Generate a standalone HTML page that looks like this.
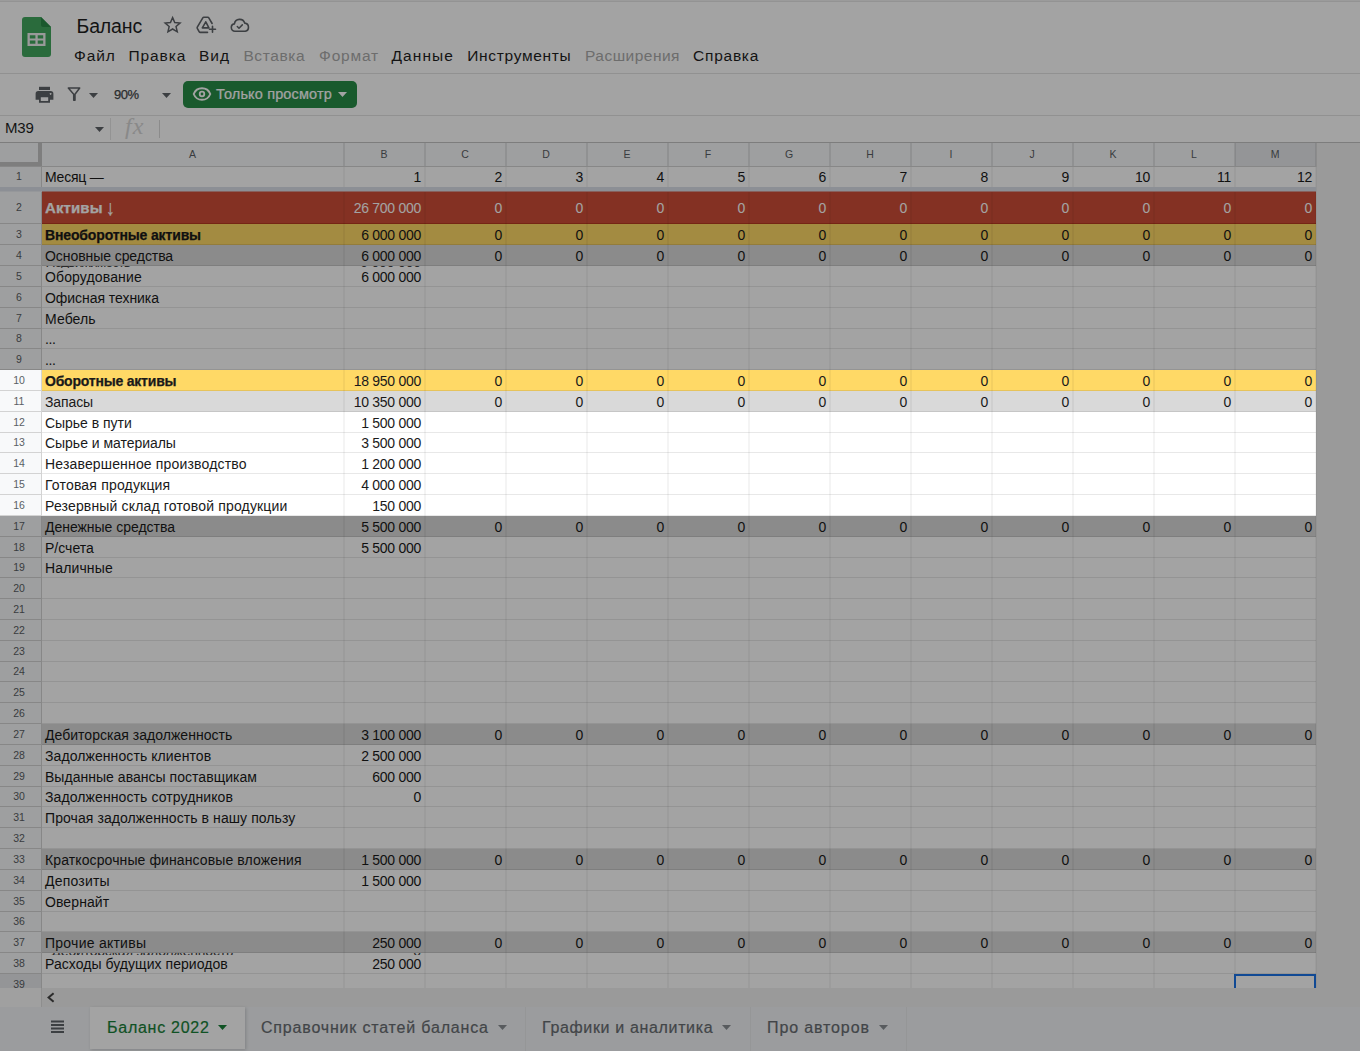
<!DOCTYPE html><html lang="ru"><head><meta charset="utf-8"><title>Баланс</title><style>
*{box-sizing:border-box;margin:0;padding:0}
html,body{width:1360px;height:1051px;overflow:hidden;background:#fff}
body{position:relative;font-family:"Liberation Sans",sans-serif;color:#000}
.a{position:absolute;white-space:pre}
.t{position:absolute;white-space:pre;line-height:1}
.menu{font-size:15.5px;top:47.5px;height:16px;line-height:16px;color:#1f1f1f}
.menu.dis{color:#ababab}
.c{position:absolute;white-space:pre;font-size:14px;overflow:hidden;color:#1a1a1a}
.ca{padding-left:3px}
.cn{text-align:right;padding-right:3px;font-size:14px;letter-spacing:-0.28px}
.b{font-weight:bold;-webkit-text-stroke:0.25px currentColor}
.rh{position:absolute;left:0;width:38px;text-align:center;font-size:10.5px;color:#5a5f64}
.ch{position:absolute;top:143px;height:23px;line-height:23px;text-align:center;font-size:10.5px;color:#5a5f64}
.vl{position:absolute;width:1px;background:#e1e1e1}
.hl{position:absolute;height:1px;background:#e1e1e1}
.tab{position:absolute;top:1007px;height:44px;font-size:16px;color:#5f6368}
</style></head><body>
<div class="a" style="left:0;top:0;width:1360px;height:1px;background:#f2f2f2"></div>
<div class="a" style="left:0;top:1px;width:1360px;height:1px;background:#e6e6e6"></div>
<svg class="a" style="left:22px;top:17px" width="29" height="40" viewBox="0 0 29 40"><path d="M3 0h16l10 10v27a3 3 0 0 1-3 3H3a3 3 0 0 1-3-3V3a3 3 0 0 1 3-3z" fill="#43a85f"/><path d="M19 0l10 10H21a2 2 0 0 1-2-2z" fill="#2a8a47"/><path d="M5.500 16v13h18V16zm2.300 2.300h5.600v3.100H7.800zm7.900 0h5.500v3.100h-5.500zM7.800 23.600h5.600v3.100H7.800zm7.900 0h5.500v3.100h-5.500z" fill="#f1f1f1" fill-rule="evenodd"/></svg>
<div class="t" style="left:76.5px;top:15px;font-size:19.5px;line-height:22px;letter-spacing:-0.148px;color:#1f1f1f">Баланс</div>
<svg class="a" style="left:163px;top:15px" width="20" height="20" viewBox="0 0 20 20"><path d="M9.600 2.600l2.150 4.900 5.300.5-4 3.550 1.200 5.250-4.650-2.800-4.650 2.800 1.200-5.250-4-3.550 5.300-.5z" fill="none" stroke="#5f6368" stroke-width="1.500" stroke-linejoin="miter"/></svg>
<svg class="a" style="left:195px;top:15px" width="24" height="20" viewBox="0 0 24 20"><g fill="none" stroke="#5f6368" stroke-width="1.600" stroke-linejoin="round" stroke-linecap="round"><path d="M12.500 17.400H5.300a1.200 1.200 0 0 1-1.050-.6L2.300 13.400a1.200 1.200 0 0 1 0-1.200L7.800 2.800a1.200 1.200 0 0 1 1.050-.6h3.900a1.200 1.200 0 0 1 1.050.6l3.300 5.700"/><path d="M10.800 6.800l-3.500 6.100h6.600z"/><path d="M17.500 11.300v6M14.500 14.300h6"/></g></svg>
<svg class="a" style="left:229px;top:17px" width="22" height="17" viewBox="0 0 22 17"><g fill="none" stroke="#5f6368" stroke-width="1.600" stroke-linejoin="round" stroke-linecap="round"><path d="M6 14.200a3.700 3.700 0 0 1-.6-7.350A5.300 5.300 0 0 1 15.700 6.100a4.100 4.100 0 0 1 .5 8.100z"/><path d="M8.300 9.500l1.700 1.700 3.300-3.300" stroke-width="1.500"/></g></svg>
<div class="a menu" style="left:74.10px;letter-spacing:0.85px">Файл</div>
<div class="a menu" style="left:128.60px;letter-spacing:0.86px">Правка</div>
<div class="a menu" style="left:199.10px;letter-spacing:0.907px">Вид</div>
<div class="a menu dis" style="left:243.40px;letter-spacing:0.622px">Вставка</div>
<div class="a menu dis" style="left:319.10px;letter-spacing:0.799px">Формат</div>
<div class="a menu" style="left:391.50px;letter-spacing:1.092px">Данные</div>
<div class="a menu" style="left:467.30px;letter-spacing:0.67px">Инструменты</div>
<div class="a menu dis" style="left:585.00px;letter-spacing:0.48px">Расширения</div>
<div class="a menu" style="left:693.10px;letter-spacing:0.741px">Справка</div>
<div class="a" style="left:0;top:73px;width:1360px;height:1px;background:#e3e3e3"></div>
<svg class="a" style="left:35px;top:86px" width="20" height="18" viewBox="0 0 20 18"><path d="M4 .8h11v3.200H4z" fill="#5f6368"/><path d="M3.300 5h12.400A2.700 2.700 0 0 1 18.400 7.700v6H15V16.800H4V13.700H.6v-6A2.700 2.700 0 0 1 3.300 5zM5.800 11.200v3.900h7.400v-3.900zM15.600 7a.9.900 0 1 0 .01 0z" fill="#5f6368" fill-rule="evenodd"/></svg>
<svg class="a" style="left:66px;top:86px" width="17" height="17" viewBox="0 0 17 17"><path d="M2.300 2h11.400L9 8.200v6H7.700v-6z" fill="none" stroke="#5f6368" stroke-width="1.500" stroke-linejoin="round"/></svg>
<svg class="a" style="left:88.500px;top:93px" width="9" height="5" viewBox="0 0 9 5"><path d="M0 0h9L4.500 5z" fill="#5f6368"/></svg>
<div class="t" style="left:114px;top:87.5px;font-size:13px;line-height:14px;-webkit-text-stroke:0.25px #44474a;letter-spacing:-0.444px;color:#44474a">90%</div>
<svg class="a" style="left:161.500px;top:93px" width="9" height="5" viewBox="0 0 9 5"><path d="M0 0h9L4.500 5z" fill="#5f6368"/></svg>
<div class="a" style="left:183px;top:81px;width:173.500px;height:26.500px;border-radius:5px;background:#288d47"></div>
<svg class="a" style="left:192px;top:86px" width="20" height="16" viewBox="0 0 20 16"><path d="M10 2.200c-3.800 0-6.900 2.300-8.300 5.800 1.400 3.500 4.500 5.800 8.300 5.800s6.900-2.300 8.300-5.800C16.900 4.500 13.800 2.200 10 2.200z" fill="none" stroke="#fff" stroke-width="1.900"/><circle cx="10" cy="8" r="2.300" fill="none" stroke="#fff" stroke-width="1.800"/></svg>
<div class="t" style="left:216px;top:86px;font-size:14.5px;line-height:16px;-webkit-text-stroke:0.2px #fff;letter-spacing:0.151px;color:#fff">Только просмотр</div>
<svg class="a" style="left:338px;top:92px" width="9" height="5" viewBox="0 0 9 5"><path d="M0 0h9L4.500 5z" fill="#fff"/></svg>
<div class="a" style="left:0;top:115px;width:1360px;height:1px;background:#e3e3e3"></div>
<div class="t" style="left:5px;top:120px;font-size:15px;line-height:16px;letter-spacing:-0.229px;color:#1f1f1f">M39</div>
<svg class="a" style="left:95px;top:127px" width="9" height="5" viewBox="0 0 9 5"><path d="M0 0h9L4.500 5z" fill="#5f6368"/></svg>
<div class="a" style="left:110px;top:118px;width:1px;height:22px;background:#e6e6e6"></div>
<div class="t" style="left:125px;top:114px;font-family:'Liberation Serif',serif;font-style:italic;font-size:24px;line-height:24px;color:#d6d6d6;letter-spacing:1px">fx</div>
<div class="a" style="left:159px;top:120px;width:1px;height:18px;background:#dadada"></div>
<div class="a" style="left:0;top:142px;width:1360px;height:1px;background:#c4c4c4"></div>
<div class="a" style="left:0;top:143px;width:1360px;height:845px;background:#f1f1f1"></div>
<div class="a" style="left:0;top:143px;width:1316px;height:23px;background:#f8f9fa"></div>
<div class="a" style="left:0;top:143px;width:42px;height:845px;background:#f8f9fa"></div>
<div class="a" style="left:42px;top:167px;width:1274px;height:821px;background:#fff"></div>
<div class="a" style="left:42px;top:192px;width:1274px;height:32px;background:#cf4e37"></div>
<div class="a" style="left:42px;top:224px;width:1274px;height:21px;background:#ffd966"></div>
<div class="a" style="left:42px;top:245px;width:1274px;height:21px;background:#d9d9d9"></div>
<div class="a" style="left:42px;top:370px;width:1274px;height:21px;background:#ffd966"></div>
<div class="a" style="left:42px;top:391px;width:1274px;height:21px;background:#d9d9d9"></div>
<div class="a" style="left:42px;top:516px;width:1274px;height:21px;background:#d9d9d9"></div>
<div class="a" style="left:42px;top:724px;width:1274px;height:21px;background:#d9d9d9"></div>
<div class="a" style="left:42px;top:849px;width:1274px;height:21px;background:#d9d9d9"></div>
<div class="a" style="left:42px;top:932px;width:1274px;height:21px;background:#d9d9d9"></div>
<div class="a" style="left:0;top:974px;width:42px;height:14px;background:#e8eaed"></div>
<div class="a" style="left:1235px;top:143px;width:81px;height:23px;background:#e8eaed"></div>
<div class="hl" style="left:42px;top:223px;width:1274px;background:#b83a21"></div>
<div class="hl" style="left:0;top:223px;width:42px;background:#d3d3d3"></div>
<div class="hl" style="left:42px;top:244px;width:1274px;background:#e6c35c"></div>
<div class="hl" style="left:0;top:244px;width:42px;background:#d3d3d3"></div>
<div class="hl" style="left:42px;top:265px;width:1274px;background:#c6c6c6"></div>
<div class="hl" style="left:0;top:265px;width:42px;background:#d3d3d3"></div>
<div class="hl" style="left:42px;top:286px;width:1274px;background:#e8e8e8"></div>
<div class="hl" style="left:0;top:286px;width:42px;background:#d3d3d3"></div>
<div class="hl" style="left:42px;top:307px;width:1274px;background:#e8e8e8"></div>
<div class="hl" style="left:0;top:307px;width:42px;background:#d3d3d3"></div>
<div class="hl" style="left:42px;top:328px;width:1274px;background:#e8e8e8"></div>
<div class="hl" style="left:0;top:328px;width:42px;background:#d3d3d3"></div>
<div class="hl" style="left:42px;top:348px;width:1274px;background:#e8e8e8"></div>
<div class="hl" style="left:0;top:348px;width:42px;background:#d3d3d3"></div>
<div class="hl" style="left:42px;top:369px;width:1274px;background:#e8e8e8"></div>
<div class="hl" style="left:0;top:369px;width:42px;background:#d3d3d3"></div>
<div class="hl" style="left:42px;top:390px;width:1274px;background:#e6c35c"></div>
<div class="hl" style="left:0;top:390px;width:42px;background:#d3d3d3"></div>
<div class="hl" style="left:42px;top:411px;width:1274px;background:#c6c6c6"></div>
<div class="hl" style="left:0;top:411px;width:42px;background:#d3d3d3"></div>
<div class="hl" style="left:42px;top:432px;width:1274px;background:#e8e8e8"></div>
<div class="hl" style="left:0;top:432px;width:42px;background:#d3d3d3"></div>
<div class="hl" style="left:42px;top:452px;width:1274px;background:#e8e8e8"></div>
<div class="hl" style="left:0;top:452px;width:42px;background:#d3d3d3"></div>
<div class="hl" style="left:42px;top:473px;width:1274px;background:#e8e8e8"></div>
<div class="hl" style="left:0;top:473px;width:42px;background:#d3d3d3"></div>
<div class="hl" style="left:42px;top:494px;width:1274px;background:#e8e8e8"></div>
<div class="hl" style="left:0;top:494px;width:42px;background:#d3d3d3"></div>
<div class="hl" style="left:42px;top:515px;width:1274px;background:#e8e8e8"></div>
<div class="hl" style="left:0;top:515px;width:42px;background:#d3d3d3"></div>
<div class="hl" style="left:42px;top:536px;width:1274px;background:#c6c6c6"></div>
<div class="hl" style="left:0;top:536px;width:42px;background:#d3d3d3"></div>
<div class="hl" style="left:42px;top:557px;width:1274px;background:#e8e8e8"></div>
<div class="hl" style="left:0;top:557px;width:42px;background:#d3d3d3"></div>
<div class="hl" style="left:42px;top:577px;width:1274px;background:#e8e8e8"></div>
<div class="hl" style="left:0;top:577px;width:42px;background:#d3d3d3"></div>
<div class="hl" style="left:42px;top:598px;width:1274px;background:#e8e8e8"></div>
<div class="hl" style="left:0;top:598px;width:42px;background:#d3d3d3"></div>
<div class="hl" style="left:42px;top:619px;width:1274px;background:#e8e8e8"></div>
<div class="hl" style="left:0;top:619px;width:42px;background:#d3d3d3"></div>
<div class="hl" style="left:42px;top:640px;width:1274px;background:#e8e8e8"></div>
<div class="hl" style="left:0;top:640px;width:42px;background:#d3d3d3"></div>
<div class="hl" style="left:42px;top:661px;width:1274px;background:#e8e8e8"></div>
<div class="hl" style="left:0;top:661px;width:42px;background:#d3d3d3"></div>
<div class="hl" style="left:42px;top:681px;width:1274px;background:#e8e8e8"></div>
<div class="hl" style="left:0;top:681px;width:42px;background:#d3d3d3"></div>
<div class="hl" style="left:42px;top:702px;width:1274px;background:#e8e8e8"></div>
<div class="hl" style="left:0;top:702px;width:42px;background:#d3d3d3"></div>
<div class="hl" style="left:42px;top:723px;width:1274px;background:#e8e8e8"></div>
<div class="hl" style="left:0;top:723px;width:42px;background:#d3d3d3"></div>
<div class="hl" style="left:42px;top:744px;width:1274px;background:#c6c6c6"></div>
<div class="hl" style="left:0;top:744px;width:42px;background:#d3d3d3"></div>
<div class="hl" style="left:42px;top:765px;width:1274px;background:#e8e8e8"></div>
<div class="hl" style="left:0;top:765px;width:42px;background:#d3d3d3"></div>
<div class="hl" style="left:42px;top:786px;width:1274px;background:#e8e8e8"></div>
<div class="hl" style="left:0;top:786px;width:42px;background:#d3d3d3"></div>
<div class="hl" style="left:42px;top:806px;width:1274px;background:#e8e8e8"></div>
<div class="hl" style="left:0;top:806px;width:42px;background:#d3d3d3"></div>
<div class="hl" style="left:42px;top:827px;width:1274px;background:#e8e8e8"></div>
<div class="hl" style="left:0;top:827px;width:42px;background:#d3d3d3"></div>
<div class="hl" style="left:42px;top:848px;width:1274px;background:#e8e8e8"></div>
<div class="hl" style="left:0;top:848px;width:42px;background:#d3d3d3"></div>
<div class="hl" style="left:42px;top:869px;width:1274px;background:#c6c6c6"></div>
<div class="hl" style="left:0;top:869px;width:42px;background:#d3d3d3"></div>
<div class="hl" style="left:42px;top:890px;width:1274px;background:#e8e8e8"></div>
<div class="hl" style="left:0;top:890px;width:42px;background:#d3d3d3"></div>
<div class="hl" style="left:42px;top:911px;width:1274px;background:#e8e8e8"></div>
<div class="hl" style="left:0;top:911px;width:42px;background:#d3d3d3"></div>
<div class="hl" style="left:42px;top:931px;width:1274px;background:#e8e8e8"></div>
<div class="hl" style="left:0;top:931px;width:42px;background:#d3d3d3"></div>
<div class="hl" style="left:42px;top:952px;width:1274px;background:#c6c6c6"></div>
<div class="hl" style="left:0;top:952px;width:42px;background:#d3d3d3"></div>
<div class="hl" style="left:42px;top:973px;width:1274px;background:#e8e8e8"></div>
<div class="hl" style="left:0;top:973px;width:42px;background:#d3d3d3"></div>
<div class="vl" style="left:343px;top:167px;width:2px;height:821px;background:rgba(0,0,0,0.042)"></div>
<div class="vl" style="left:343px;top:143px;width:2px;height:24px;background:rgba(0,0,0,.085)"></div>
<div class="vl" style="left:424px;top:167px;width:2px;height:821px;background:rgba(0,0,0,0.042)"></div>
<div class="vl" style="left:424px;top:143px;width:2px;height:24px;background:rgba(0,0,0,.085)"></div>
<div class="vl" style="left:505px;top:167px;width:2px;height:821px;background:rgba(0,0,0,0.042)"></div>
<div class="vl" style="left:505px;top:143px;width:2px;height:24px;background:rgba(0,0,0,.085)"></div>
<div class="vl" style="left:586px;top:167px;width:2px;height:821px;background:rgba(0,0,0,0.042)"></div>
<div class="vl" style="left:586px;top:143px;width:2px;height:24px;background:rgba(0,0,0,.085)"></div>
<div class="vl" style="left:667px;top:167px;width:2px;height:821px;background:rgba(0,0,0,0.042)"></div>
<div class="vl" style="left:667px;top:143px;width:2px;height:24px;background:rgba(0,0,0,.085)"></div>
<div class="vl" style="left:748px;top:167px;width:2px;height:821px;background:rgba(0,0,0,0.042)"></div>
<div class="vl" style="left:748px;top:143px;width:2px;height:24px;background:rgba(0,0,0,.085)"></div>
<div class="vl" style="left:829px;top:167px;width:2px;height:821px;background:rgba(0,0,0,0.042)"></div>
<div class="vl" style="left:829px;top:143px;width:2px;height:24px;background:rgba(0,0,0,.085)"></div>
<div class="vl" style="left:910px;top:167px;width:2px;height:821px;background:rgba(0,0,0,0.042)"></div>
<div class="vl" style="left:910px;top:143px;width:2px;height:24px;background:rgba(0,0,0,.085)"></div>
<div class="vl" style="left:991px;top:167px;width:2px;height:821px;background:rgba(0,0,0,0.042)"></div>
<div class="vl" style="left:991px;top:143px;width:2px;height:24px;background:rgba(0,0,0,.085)"></div>
<div class="vl" style="left:1072px;top:167px;width:2px;height:821px;background:rgba(0,0,0,0.042)"></div>
<div class="vl" style="left:1072px;top:143px;width:2px;height:24px;background:rgba(0,0,0,.085)"></div>
<div class="vl" style="left:1153px;top:167px;width:2px;height:821px;background:rgba(0,0,0,0.042)"></div>
<div class="vl" style="left:1153px;top:143px;width:2px;height:24px;background:rgba(0,0,0,.085)"></div>
<div class="vl" style="left:1234px;top:167px;width:2px;height:821px;background:rgba(0,0,0,0.042)"></div>
<div class="vl" style="left:1234px;top:143px;width:2px;height:24px;background:rgba(0,0,0,.085)"></div>
<div class="vl" style="left:1315px;top:167px;width:2px;height:821px;background:rgba(0,0,0,0.042)"></div>
<div class="vl" style="left:1315px;top:143px;width:2px;height:24px;background:rgba(0,0,0,.085)"></div>
<div class="hl" style="left:0;top:166px;width:1316px;background:#d3d3d3"></div>
<div class="vl" style="left:41px;top:167px;height:821px;background:#d3d3d3"></div>
<div class="a" style="left:0;top:187px;width:1316px;height:4px;background:#dbe0e9"></div>
<div class="a" style="left:0;top:191px;width:42px;height:1px;background:#eaecf1"></div>
<div class="a" style="left:42px;top:191px;width:1274px;height:1px;background:#d59790"></div>
<div class="a" style="left:38px;top:143px;width:4px;height:23px;background:#c6c6c6"></div>
<div class="a" style="left:0;top:162px;width:42px;height:4px;background:#c6c6c6"></div>
<div class="ch" style="left:42px;width:301px">A</div>
<div class="ch" style="left:344px;width:80px">B</div>
<div class="ch" style="left:425px;width:80px">C</div>
<div class="ch" style="left:506px;width:80px">D</div>
<div class="ch" style="left:587px;width:80px">E</div>
<div class="ch" style="left:668px;width:80px">F</div>
<div class="ch" style="left:749px;width:80px">G</div>
<div class="ch" style="left:830px;width:80px">H</div>
<div class="ch" style="left:911px;width:80px">I</div>
<div class="ch" style="left:992px;width:80px">J</div>
<div class="ch" style="left:1073px;width:80px">K</div>
<div class="ch" style="left:1154px;width:80px">L</div>
<div class="ch" style="left:1235px;width:80px">M</div>
<div class="rh" style="top:167px;height:19px;line-height:19px">1</div>
<div class="c ca" style="left:42px;top:167px;width:301px;height:19px;line-height:21.0px;letter-spacing:-0.216px;">Месяц —</div>
<div class="c cn" style="left:344px;top:167px;width:80px;height:19px;line-height:21.0px;">1</div>
<div class="c cn" style="left:425px;top:167px;width:80px;height:19px;line-height:21.0px;">2</div>
<div class="c cn" style="left:506px;top:167px;width:80px;height:19px;line-height:21.0px;">3</div>
<div class="c cn" style="left:587px;top:167px;width:80px;height:19px;line-height:21.0px;">4</div>
<div class="c cn" style="left:668px;top:167px;width:80px;height:19px;line-height:21.0px;">5</div>
<div class="c cn" style="left:749px;top:167px;width:80px;height:19px;line-height:21.0px;">6</div>
<div class="c cn" style="left:830px;top:167px;width:80px;height:19px;line-height:21.0px;">7</div>
<div class="c cn" style="left:911px;top:167px;width:80px;height:19px;line-height:21.0px;">8</div>
<div class="c cn" style="left:992px;top:167px;width:80px;height:19px;line-height:21.0px;">9</div>
<div class="c cn" style="left:1073px;top:167px;width:80px;height:19px;line-height:21.0px;">10</div>
<div class="c cn" style="left:1154px;top:167px;width:80px;height:19px;line-height:21.0px;">11</div>
<div class="c cn" style="left:1235px;top:167px;width:80px;height:19px;line-height:21.0px;">12</div>
<div class="rh" style="top:192px;height:31px;line-height:31px">2</div>
<div class="c ca b" style="left:42px;top:192px;width:301px;height:31px;line-height:32px;font-size:15px;letter-spacing:0.108px;color:#fff;">Активы <span style="display:inline-block;font-weight:normal;font-size:17px;line-height:10px;transform:translate(-1px,1px) scale(1,1.25)">↓</span></div>
<div class="c cn" style="left:344px;top:192px;width:80px;height:31px;line-height:32px;color:#fff;">26 700 000</div>
<div class="c cn" style="left:425px;top:192px;width:80px;height:31px;line-height:32px;color:#fff;">0</div>
<div class="c cn" style="left:506px;top:192px;width:80px;height:31px;line-height:32px;color:#fff;">0</div>
<div class="c cn" style="left:587px;top:192px;width:80px;height:31px;line-height:32px;color:#fff;">0</div>
<div class="c cn" style="left:668px;top:192px;width:80px;height:31px;line-height:32px;color:#fff;">0</div>
<div class="c cn" style="left:749px;top:192px;width:80px;height:31px;line-height:32px;color:#fff;">0</div>
<div class="c cn" style="left:830px;top:192px;width:80px;height:31px;line-height:32px;color:#fff;">0</div>
<div class="c cn" style="left:911px;top:192px;width:80px;height:31px;line-height:32px;color:#fff;">0</div>
<div class="c cn" style="left:992px;top:192px;width:80px;height:31px;line-height:32px;color:#fff;">0</div>
<div class="c cn" style="left:1073px;top:192px;width:80px;height:31px;line-height:32px;color:#fff;">0</div>
<div class="c cn" style="left:1154px;top:192px;width:80px;height:31px;line-height:32px;color:#fff;">0</div>
<div class="c cn" style="left:1235px;top:192px;width:80px;height:31px;line-height:32px;color:#fff;">0</div>
<div class="rh" style="top:224px;height:20px;line-height:20px">3</div>
<div class="c ca b" style="left:42px;top:224px;width:301px;height:20px;line-height:22.0px;letter-spacing:-0.143px;">Внеоборотные активы</div>
<div class="c cn" style="left:344px;top:224px;width:80px;height:20px;line-height:22.0px;">6 000 000</div>
<div class="c cn" style="left:425px;top:224px;width:80px;height:20px;line-height:22.0px;">0</div>
<div class="c cn" style="left:506px;top:224px;width:80px;height:20px;line-height:22.0px;">0</div>
<div class="c cn" style="left:587px;top:224px;width:80px;height:20px;line-height:22.0px;">0</div>
<div class="c cn" style="left:668px;top:224px;width:80px;height:20px;line-height:22.0px;">0</div>
<div class="c cn" style="left:749px;top:224px;width:80px;height:20px;line-height:22.0px;">0</div>
<div class="c cn" style="left:830px;top:224px;width:80px;height:20px;line-height:22.0px;">0</div>
<div class="c cn" style="left:911px;top:224px;width:80px;height:20px;line-height:22.0px;">0</div>
<div class="c cn" style="left:992px;top:224px;width:80px;height:20px;line-height:22.0px;">0</div>
<div class="c cn" style="left:1073px;top:224px;width:80px;height:20px;line-height:22.0px;">0</div>
<div class="c cn" style="left:1154px;top:224px;width:80px;height:20px;line-height:22.0px;">0</div>
<div class="c cn" style="left:1235px;top:224px;width:80px;height:20px;line-height:22.0px;">0</div>
<div class="rh" style="top:245px;height:20px;line-height:20px">4</div>
<div class="c ca" style="left:42px;top:245px;width:301px;height:20px;line-height:22.0px;letter-spacing:-0.067px;">Основные средства</div>
<div class="c cn" style="left:344px;top:245px;width:80px;height:20px;line-height:22.0px;">6 000 000</div>
<div class="c cn" style="left:425px;top:245px;width:80px;height:20px;line-height:22.0px;">0</div>
<div class="c cn" style="left:506px;top:245px;width:80px;height:20px;line-height:22.0px;">0</div>
<div class="c cn" style="left:587px;top:245px;width:80px;height:20px;line-height:22.0px;">0</div>
<div class="c cn" style="left:668px;top:245px;width:80px;height:20px;line-height:22.0px;">0</div>
<div class="c cn" style="left:749px;top:245px;width:80px;height:20px;line-height:22.0px;">0</div>
<div class="c cn" style="left:830px;top:245px;width:80px;height:20px;line-height:22.0px;">0</div>
<div class="c cn" style="left:911px;top:245px;width:80px;height:20px;line-height:22.0px;">0</div>
<div class="c cn" style="left:992px;top:245px;width:80px;height:20px;line-height:22.0px;">0</div>
<div class="c cn" style="left:1073px;top:245px;width:80px;height:20px;line-height:22.0px;">0</div>
<div class="c cn" style="left:1154px;top:245px;width:80px;height:20px;line-height:22.0px;">0</div>
<div class="c cn" style="left:1235px;top:245px;width:80px;height:20px;line-height:22.0px;">0</div>
<div class="rh" style="top:266px;height:20px;line-height:20px">5</div>
<div class="c ca" style="left:42px;top:266px;width:301px;height:20px;line-height:22.0px;letter-spacing:0.132px;">Оборудование</div>
<div class="c cn" style="left:344px;top:266px;width:80px;height:20px;line-height:22.0px;">6 000 000</div>
<div class="rh" style="top:287px;height:20px;line-height:20px">6</div>
<div class="c ca" style="left:42px;top:287px;width:301px;height:20px;line-height:22.0px;letter-spacing:-0.049px;">Офисная техника</div>
<div class="rh" style="top:308px;height:20px;line-height:20px">7</div>
<div class="c ca" style="left:42px;top:308px;width:301px;height:20px;line-height:22.0px;letter-spacing:0.101px;">Мебель</div>
<div class="rh" style="top:329px;height:19px;line-height:19px">8</div>
<div class="c ca" style="left:42px;top:329px;width:301px;height:19px;line-height:21.0px;letter-spacing:-0.424px;">...</div>
<div class="rh" style="top:349px;height:20px;line-height:20px">9</div>
<div class="c ca" style="left:42px;top:349px;width:301px;height:20px;line-height:22.0px;letter-spacing:-0.424px;">...</div>
<div class="rh" style="top:370px;height:20px;line-height:20px">10</div>
<div class="c ca b" style="left:42px;top:370px;width:301px;height:20px;line-height:22.0px;letter-spacing:-0.207px;">Оборотные активы</div>
<div class="c cn" style="left:344px;top:370px;width:80px;height:20px;line-height:22.0px;">18 950 000</div>
<div class="c cn" style="left:425px;top:370px;width:80px;height:20px;line-height:22.0px;">0</div>
<div class="c cn" style="left:506px;top:370px;width:80px;height:20px;line-height:22.0px;">0</div>
<div class="c cn" style="left:587px;top:370px;width:80px;height:20px;line-height:22.0px;">0</div>
<div class="c cn" style="left:668px;top:370px;width:80px;height:20px;line-height:22.0px;">0</div>
<div class="c cn" style="left:749px;top:370px;width:80px;height:20px;line-height:22.0px;">0</div>
<div class="c cn" style="left:830px;top:370px;width:80px;height:20px;line-height:22.0px;">0</div>
<div class="c cn" style="left:911px;top:370px;width:80px;height:20px;line-height:22.0px;">0</div>
<div class="c cn" style="left:992px;top:370px;width:80px;height:20px;line-height:22.0px;">0</div>
<div class="c cn" style="left:1073px;top:370px;width:80px;height:20px;line-height:22.0px;">0</div>
<div class="c cn" style="left:1154px;top:370px;width:80px;height:20px;line-height:22.0px;">0</div>
<div class="c cn" style="left:1235px;top:370px;width:80px;height:20px;line-height:22.0px;">0</div>
<div class="rh" style="top:391px;height:20px;line-height:20px">11</div>
<div class="c ca" style="left:42px;top:391px;width:301px;height:20px;line-height:22.0px;letter-spacing:-0.112px;">Запасы</div>
<div class="c cn" style="left:344px;top:391px;width:80px;height:20px;line-height:22.0px;">10 350 000</div>
<div class="c cn" style="left:425px;top:391px;width:80px;height:20px;line-height:22.0px;">0</div>
<div class="c cn" style="left:506px;top:391px;width:80px;height:20px;line-height:22.0px;">0</div>
<div class="c cn" style="left:587px;top:391px;width:80px;height:20px;line-height:22.0px;">0</div>
<div class="c cn" style="left:668px;top:391px;width:80px;height:20px;line-height:22.0px;">0</div>
<div class="c cn" style="left:749px;top:391px;width:80px;height:20px;line-height:22.0px;">0</div>
<div class="c cn" style="left:830px;top:391px;width:80px;height:20px;line-height:22.0px;">0</div>
<div class="c cn" style="left:911px;top:391px;width:80px;height:20px;line-height:22.0px;">0</div>
<div class="c cn" style="left:992px;top:391px;width:80px;height:20px;line-height:22.0px;">0</div>
<div class="c cn" style="left:1073px;top:391px;width:80px;height:20px;line-height:22.0px;">0</div>
<div class="c cn" style="left:1154px;top:391px;width:80px;height:20px;line-height:22.0px;">0</div>
<div class="c cn" style="left:1235px;top:391px;width:80px;height:20px;line-height:22.0px;">0</div>
<div class="rh" style="top:412px;height:20px;line-height:20px">12</div>
<div class="c ca" style="left:42px;top:412px;width:301px;height:20px;line-height:22.0px;letter-spacing:-0.032px;">Сырье в пути</div>
<div class="c cn" style="left:344px;top:412px;width:80px;height:20px;line-height:22.0px;">1 500 000</div>
<div class="rh" style="top:433px;height:19px;line-height:19px">13</div>
<div class="c ca" style="left:42px;top:433px;width:301px;height:19px;line-height:21.0px;letter-spacing:-0.031px;">Сырье и материалы</div>
<div class="c cn" style="left:344px;top:433px;width:80px;height:19px;line-height:21.0px;">3 500 000</div>
<div class="rh" style="top:453px;height:20px;line-height:20px">14</div>
<div class="c ca" style="left:42px;top:453px;width:301px;height:20px;line-height:22.0px;letter-spacing:0.162px;">Незавершенное производство</div>
<div class="c cn" style="left:344px;top:453px;width:80px;height:20px;line-height:22.0px;">1 200 000</div>
<div class="rh" style="top:474px;height:20px;line-height:20px">15</div>
<div class="c ca" style="left:42px;top:474px;width:301px;height:20px;line-height:22.0px;letter-spacing:0.184px;">Готовая продукция</div>
<div class="c cn" style="left:344px;top:474px;width:80px;height:20px;line-height:22.0px;">4 000 000</div>
<div class="rh" style="top:495px;height:20px;line-height:20px">16</div>
<div class="c ca" style="left:42px;top:495px;width:301px;height:20px;line-height:22.0px;letter-spacing:0.161px;">Резервный склад готовой продукции</div>
<div class="c cn" style="left:344px;top:495px;width:80px;height:20px;line-height:22.0px;">150 000</div>
<div class="rh" style="top:516px;height:20px;line-height:20px">17</div>
<div class="c ca" style="left:42px;top:516px;width:301px;height:20px;line-height:22.0px;letter-spacing:-0.028px;">Денежные средства</div>
<div class="c cn" style="left:344px;top:516px;width:80px;height:20px;line-height:22.0px;">5 500 000</div>
<div class="c cn" style="left:425px;top:516px;width:80px;height:20px;line-height:22.0px;">0</div>
<div class="c cn" style="left:506px;top:516px;width:80px;height:20px;line-height:22.0px;">0</div>
<div class="c cn" style="left:587px;top:516px;width:80px;height:20px;line-height:22.0px;">0</div>
<div class="c cn" style="left:668px;top:516px;width:80px;height:20px;line-height:22.0px;">0</div>
<div class="c cn" style="left:749px;top:516px;width:80px;height:20px;line-height:22.0px;">0</div>
<div class="c cn" style="left:830px;top:516px;width:80px;height:20px;line-height:22.0px;">0</div>
<div class="c cn" style="left:911px;top:516px;width:80px;height:20px;line-height:22.0px;">0</div>
<div class="c cn" style="left:992px;top:516px;width:80px;height:20px;line-height:22.0px;">0</div>
<div class="c cn" style="left:1073px;top:516px;width:80px;height:20px;line-height:22.0px;">0</div>
<div class="c cn" style="left:1154px;top:516px;width:80px;height:20px;line-height:22.0px;">0</div>
<div class="c cn" style="left:1235px;top:516px;width:80px;height:20px;line-height:22.0px;">0</div>
<div class="rh" style="top:537px;height:20px;line-height:20px">18</div>
<div class="c ca" style="left:42px;top:537px;width:301px;height:20px;line-height:22.0px;letter-spacing:0.009px;">Р/счета</div>
<div class="c cn" style="left:344px;top:537px;width:80px;height:20px;line-height:22.0px;">5 500 000</div>
<div class="rh" style="top:558px;height:19px;line-height:19px">19</div>
<div class="c ca" style="left:42px;top:558px;width:301px;height:19px;line-height:21.0px;letter-spacing:0.129px;">Наличные</div>
<div class="rh" style="top:578px;height:20px;line-height:20px">20</div>
<div class="rh" style="top:599px;height:20px;line-height:20px">21</div>
<div class="rh" style="top:620px;height:20px;line-height:20px">22</div>
<div class="rh" style="top:641px;height:20px;line-height:20px">23</div>
<div class="rh" style="top:662px;height:19px;line-height:19px">24</div>
<div class="rh" style="top:682px;height:20px;line-height:20px">25</div>
<div class="rh" style="top:703px;height:20px;line-height:20px">26</div>
<div class="rh" style="top:724px;height:20px;line-height:20px">27</div>
<div class="c ca" style="left:42px;top:724px;width:301px;height:20px;line-height:22.0px;letter-spacing:0.028px;">Дебиторская задолженность</div>
<div class="c cn" style="left:344px;top:724px;width:80px;height:20px;line-height:22.0px;">3 100 000</div>
<div class="c cn" style="left:425px;top:724px;width:80px;height:20px;line-height:22.0px;">0</div>
<div class="c cn" style="left:506px;top:724px;width:80px;height:20px;line-height:22.0px;">0</div>
<div class="c cn" style="left:587px;top:724px;width:80px;height:20px;line-height:22.0px;">0</div>
<div class="c cn" style="left:668px;top:724px;width:80px;height:20px;line-height:22.0px;">0</div>
<div class="c cn" style="left:749px;top:724px;width:80px;height:20px;line-height:22.0px;">0</div>
<div class="c cn" style="left:830px;top:724px;width:80px;height:20px;line-height:22.0px;">0</div>
<div class="c cn" style="left:911px;top:724px;width:80px;height:20px;line-height:22.0px;">0</div>
<div class="c cn" style="left:992px;top:724px;width:80px;height:20px;line-height:22.0px;">0</div>
<div class="c cn" style="left:1073px;top:724px;width:80px;height:20px;line-height:22.0px;">0</div>
<div class="c cn" style="left:1154px;top:724px;width:80px;height:20px;line-height:22.0px;">0</div>
<div class="c cn" style="left:1235px;top:724px;width:80px;height:20px;line-height:22.0px;">0</div>
<div class="rh" style="top:745px;height:20px;line-height:20px">28</div>
<div class="c ca" style="left:42px;top:745px;width:301px;height:20px;line-height:22.0px;letter-spacing:0.085px;">Задолженность клиентов</div>
<div class="c cn" style="left:344px;top:745px;width:80px;height:20px;line-height:22.0px;">2 500 000</div>
<div class="rh" style="top:766px;height:20px;line-height:20px">29</div>
<div class="c ca" style="left:42px;top:766px;width:301px;height:20px;line-height:22.0px;letter-spacing:0.032px;">Выданные авансы поставщикам</div>
<div class="c cn" style="left:344px;top:766px;width:80px;height:20px;line-height:22.0px;">600 000</div>
<div class="rh" style="top:787px;height:19px;line-height:19px">30</div>
<div class="c ca" style="left:42px;top:787px;width:301px;height:19px;line-height:21.0px;letter-spacing:0.1px;">Задолженность сотрудников</div>
<div class="c cn" style="left:344px;top:787px;width:80px;height:19px;line-height:21.0px;">0</div>
<div class="rh" style="top:807px;height:20px;line-height:20px">31</div>
<div class="c ca" style="left:42px;top:807px;width:301px;height:20px;line-height:22.0px;letter-spacing:0.081px;">Прочая задолженность в нашу пользу</div>
<div class="rh" style="top:828px;height:20px;line-height:20px">32</div>
<div class="rh" style="top:849px;height:20px;line-height:20px">33</div>
<div class="c ca" style="left:42px;top:849px;width:301px;height:20px;line-height:22.0px;letter-spacing:0.109px;">Краткосрочные финансовые вложения</div>
<div class="c cn" style="left:344px;top:849px;width:80px;height:20px;line-height:22.0px;">1 500 000</div>
<div class="c cn" style="left:425px;top:849px;width:80px;height:20px;line-height:22.0px;">0</div>
<div class="c cn" style="left:506px;top:849px;width:80px;height:20px;line-height:22.0px;">0</div>
<div class="c cn" style="left:587px;top:849px;width:80px;height:20px;line-height:22.0px;">0</div>
<div class="c cn" style="left:668px;top:849px;width:80px;height:20px;line-height:22.0px;">0</div>
<div class="c cn" style="left:749px;top:849px;width:80px;height:20px;line-height:22.0px;">0</div>
<div class="c cn" style="left:830px;top:849px;width:80px;height:20px;line-height:22.0px;">0</div>
<div class="c cn" style="left:911px;top:849px;width:80px;height:20px;line-height:22.0px;">0</div>
<div class="c cn" style="left:992px;top:849px;width:80px;height:20px;line-height:22.0px;">0</div>
<div class="c cn" style="left:1073px;top:849px;width:80px;height:20px;line-height:22.0px;">0</div>
<div class="c cn" style="left:1154px;top:849px;width:80px;height:20px;line-height:22.0px;">0</div>
<div class="c cn" style="left:1235px;top:849px;width:80px;height:20px;line-height:22.0px;">0</div>
<div class="rh" style="top:870px;height:20px;line-height:20px">34</div>
<div class="c ca" style="left:42px;top:870px;width:301px;height:20px;line-height:22.0px;letter-spacing:0.2px;">Депозиты</div>
<div class="c cn" style="left:344px;top:870px;width:80px;height:20px;line-height:22.0px;">1 500 000</div>
<div class="rh" style="top:891px;height:20px;line-height:20px">35</div>
<div class="c ca" style="left:42px;top:891px;width:301px;height:20px;line-height:22.0px;letter-spacing:0.1px;">Овернайт</div>
<div class="rh" style="top:912px;height:19px;line-height:19px">36</div>
<div class="rh" style="top:932px;height:20px;line-height:20px">37</div>
<div class="c ca" style="left:42px;top:932px;width:301px;height:20px;line-height:22.0px;letter-spacing:0.252px;">Прочие активы</div>
<div class="c cn" style="left:344px;top:932px;width:80px;height:20px;line-height:22.0px;">250 000</div>
<div class="c cn" style="left:425px;top:932px;width:80px;height:20px;line-height:22.0px;">0</div>
<div class="c cn" style="left:506px;top:932px;width:80px;height:20px;line-height:22.0px;">0</div>
<div class="c cn" style="left:587px;top:932px;width:80px;height:20px;line-height:22.0px;">0</div>
<div class="c cn" style="left:668px;top:932px;width:80px;height:20px;line-height:22.0px;">0</div>
<div class="c cn" style="left:749px;top:932px;width:80px;height:20px;line-height:22.0px;">0</div>
<div class="c cn" style="left:830px;top:932px;width:80px;height:20px;line-height:22.0px;">0</div>
<div class="c cn" style="left:911px;top:932px;width:80px;height:20px;line-height:22.0px;">0</div>
<div class="c cn" style="left:992px;top:932px;width:80px;height:20px;line-height:22.0px;">0</div>
<div class="c cn" style="left:1073px;top:932px;width:80px;height:20px;line-height:22.0px;">0</div>
<div class="c cn" style="left:1154px;top:932px;width:80px;height:20px;line-height:22.0px;">0</div>
<div class="c cn" style="left:1235px;top:932px;width:80px;height:20px;line-height:22.0px;">0</div>
<div class="rh" style="top:953px;height:20px;line-height:20px">38</div>
<div class="c ca" style="left:42px;top:953px;width:301px;height:20px;line-height:22.0px;letter-spacing:0.05px;">Расходы будущих периодов</div>
<div class="c cn" style="left:344px;top:953px;width:80px;height:20px;line-height:22.0px;">250 000</div>
<div class="rh" style="top:974px;height:20px;line-height:20px">39</div>
<div class="a" style="left:42px;top:266px;width:301px;height:2px;overflow:hidden"><div class="a" style="left:3.5px;top:-12.07px;font-size:14px;line-height:16px;color:#444;letter-spacing:-0.986px">Недвижимость</div></div>
<div class="a" style="left:344px;top:266px;width:80px;height:2px;overflow:hidden"><div class="a" style="right:3px;top:-12.07px;font-size:14px;line-height:16px;color:#444;letter-spacing:-0.15px">6 000 000</div></div>
<div class="a" style="left:42px;top:953px;width:301px;height:2px;overflow:hidden"><div class="a" style="left:9.5px;top:-10.27px;font-size:14px;line-height:16px;color:#444;letter-spacing:-0.204px">Дебиторская задолженность</div></div>
<div class="a" style="left:344px;top:953px;width:80px;height:2px;overflow:hidden"><div class="a" style="right:3px;top:-10.27px;font-size:14px;line-height:16px;color:#444;letter-spacing:-0.15px">0</div></div>
<div class="a" style="left:1234px;top:974px;width:82px;height:30px;border:2px solid #1a73e8"></div>
<div class="a" style="left:0;top:988px;width:1360px;height:19px;background:#f1f1f1"></div>
<div class="a" style="left:0;top:988px;width:42px;height:19px;background:#fafafa"></div>
<div class="a" style="left:41px;top:988px;width:1px;height:19px;background:#dedede"></div>
<svg class="a" style="left:46px;top:992px" width="10" height="11" viewBox="0 0 10 11"><path d="M7.600 1.300L2.600 5.500l5 4.200" fill="none" stroke="#444" stroke-width="2"/></svg>
<div class="a" style="left:0;top:1007px;width:1360px;height:44px;background:#f2f4f7"></div>
<svg class="a" style="left:50px;top:1020px" width="15" height="14" viewBox="0 0 15 14"><path d="M1 1.500h13M1 5h13M1 8.500h13M1 12h13" stroke="#5f6368" stroke-width="2"/></svg>
<div class="a" style="left:90px;top:1007px;width:154.500px;height:42px;background:#fff;box-shadow:1px 1px 3px 0 rgba(60,64,67,.22)"></div>
<div class="t" style="left:107.00px;top:1018.5px;font-size:16px;line-height:18px;-webkit-text-stroke:0.2px #188038;letter-spacing:0.74px;color:#188038">Баланс 2022</div>
<svg class="a" style="left:217.5px;top:1025px" width="9" height="5" viewBox="0 0 9 5"><path d="M0 0h9L4.500 5z" fill="#188038"/></svg>
<div class="t" style="left:261.00px;top:1018.5px;font-size:16px;line-height:18px;-webkit-text-stroke:0.2px #686c71;letter-spacing:0.82px;color:#686c71">Справочник статей баланса</div>
<svg class="a" style="left:497.5px;top:1025px" width="9" height="5" viewBox="0 0 9 5"><path d="M0 0h9L4.500 5z" fill="#8a8f94"/></svg>
<div class="t" style="left:542.00px;top:1018.5px;font-size:16px;line-height:18px;-webkit-text-stroke:0.2px #686c71;letter-spacing:0.653px;color:#686c71">Графики и аналитика</div>
<svg class="a" style="left:722.2px;top:1025px" width="9" height="5" viewBox="0 0 9 5"><path d="M0 0h9L4.500 5z" fill="#8a8f94"/></svg>
<div class="t" style="left:767.00px;top:1018.5px;font-size:16px;line-height:18px;-webkit-text-stroke:0.2px #686c71;letter-spacing:0.878px;color:#686c71">Про авторов</div>
<svg class="a" style="left:878.5px;top:1025px" width="9" height="5" viewBox="0 0 9 5"><path d="M0 0h9L4.500 5z" fill="#8a8f94"/></svg>
<div class="a" style="left:525px;top:1007px;width:1px;height:44px;background:#eaebed"></div>
<div class="a" style="left:750px;top:1007px;width:1px;height:44px;background:#eaebed"></div>
<div class="a" style="left:905.5px;top:1007px;width:1px;height:44px;background:#eaebed"></div>
<div class="a" style="left:0;top:370px;width:1316px;height:146px;box-shadow:0 0 0 3000px rgba(0,0,0,.36);pointer-events:none"></div>
</body></html>
